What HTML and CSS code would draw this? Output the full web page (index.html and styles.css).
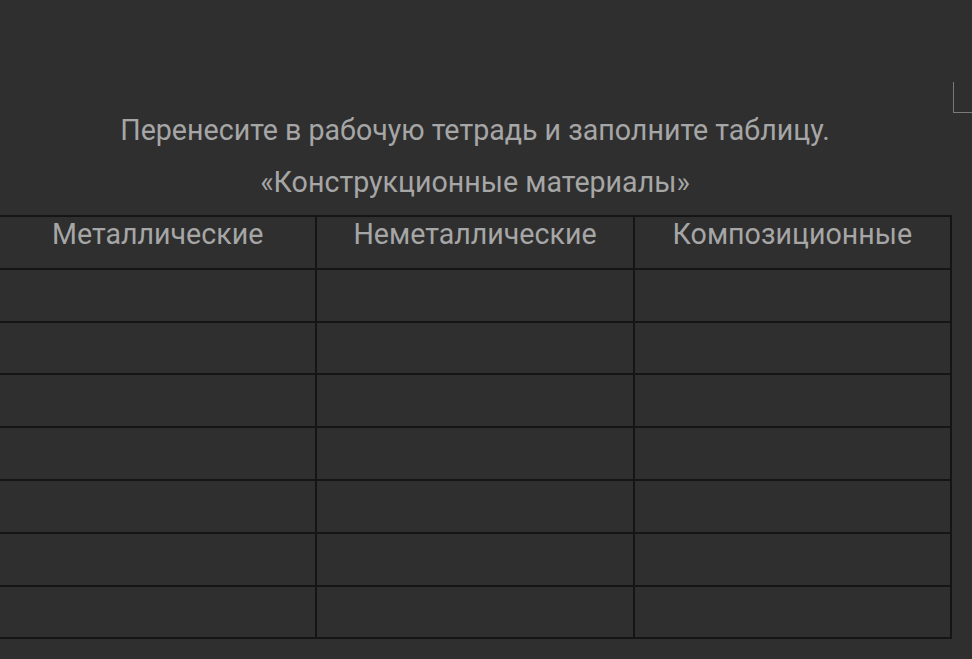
FILE: index.html
```html
<!DOCTYPE html>
<html lang="ru">
<head>
<meta charset="utf-8">
<link rel="stylesheet" href="styles.css">
</head>
<body>
<div class="corner"></div>
<main class="sheet">
  <p class="line">Перенесите в рабочую тетрадь и заполните таблицу.</p>
  <p class="line">«Конструкционные материалы»</p>
  <table class="grid">
    <tr class="head"><th>Металлические</th><th>Неметаллические</th><th>Композиционные</th></tr>
    <tr><td></td><td></td><td></td></tr>
    <tr><td></td><td></td><td></td></tr>
    <tr><td></td><td></td><td></td></tr>
    <tr><td></td><td></td><td></td></tr>
    <tr><td></td><td></td><td></td></tr>
    <tr><td></td><td></td><td></td></tr>
    <tr><td></td><td></td><td></td></tr>
  </table>
</main>
</body>
</html>
```
FILE: styles.css
```css
html, body {
  margin: 0;
  padding: 0;
  background: #2f2f2f;
  height: 100%;
  overflow: hidden;
}
body {
  font-family: Roboto, "Noto Sans", sans-serif;
  color: #a6a6a6;
  position: relative;
}
.corner {
  position: absolute;
  left: 953px;
  top: 82px;
  width: 20px;
  height: 30px;
  border-left: 1px solid #7a7a7a;
  border-bottom: 1px solid #7a7a7a;
}
.sheet {
  width: 954px;
  margin-left: -2px;
  padding-top: 104px;
}
.line {
  margin: 0;
  text-align: center;
  font-size: 28.6px;
  line-height: 52px;
}
.grid {
  margin-top: 7px;
  width: 954px;
  border-collapse: collapse;
  table-layout: fixed;
}
.grid tr {
  height: 52.8px;
}
.grid td, .grid th {
  border: 2px solid #151515;
  padding: 0;
}
.grid th {
  font-weight: 400;
  font-size: 28.6px;
  vertical-align: top;
  padding-top: 0;
  line-height: 34px;
}
```
